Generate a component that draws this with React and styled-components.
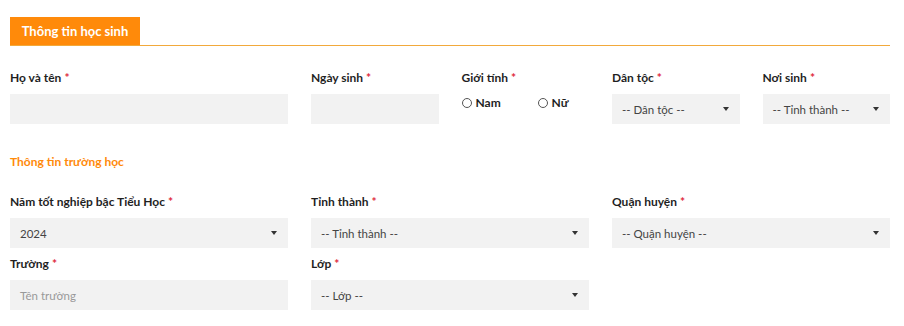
import React from "react";
import styled, { createGlobalStyle } from "styled-components";

const Global = createGlobalStyle`
  html, body { margin: 0; padding: 0; background: #fff; }
  body { font-family: Lato, "Open Sans", "Noto Sans", sans-serif; color: #222; }
  * { box-sizing: border-box; }
`;

const Page = styled.div`
  width: 904px;
  padding: 17px 14px 0 10px;
`;

const TabBar = styled.div`
  display: flex;
  border-bottom: 1px solid #f2a93b;
`;

const Tab = styled.div`
  background: #ff8a0a;
  color: #fff;
  font-weight: 700;
  font-size: 13px;
  height: 28px;
  line-height: 28px;
  width: 130px;
  text-align: center;
`;

const Grid = styled.div`
  display: grid;
  grid-template-columns: repeat(6, minmax(0, 1fr));
  column-gap: 23px;
  row-gap: ${(p) => p.$rowGap || 0}px;
  margin-top: ${(p) => p.$top || 0}px;
`;

const Field = styled.div`
  grid-column: span ${(p) => p.$span || 1};
  display: flex;
  flex-direction: column;
`;

const Label = styled.div`
  font-size: 12px;
  font-weight: 700;
  line-height: 16px;
  margin-bottom: 8px;
  color: #1f1f1f;
`;

const Req = styled.span`
  color: #e0283c;
  margin-left: 3px;
`;

const Box = styled.div`
  height: 30px;
  background: #f2f2f2;
  display: flex;
  align-items: center;
  padding: 0 10px;
  font-size: 11.5px;
  color: ${(p) => (p.$placeholder ? "#999" : "#444")};
  justify-content: space-between;
`;

const Caret = styled.span`
  width: 0;
  height: 0;
  border-left: 3.5px solid transparent;
  border-right: 3.5px solid transparent;
  border-top: 4px solid #333;
  margin-right: 1px;
`;

const Radios = styled.div`
  display: flex;
  align-items: center;
  margin-top: 1px;
`;

const RadioItem = styled.label`
  display: flex;
  align-items: center;
  flex: none;
  width: 76px;
  font-size: 12px;
  font-weight: 700;
  color: #1f1f1f;
`;

const Circle = styled.span`
  width: 10px;
  height: 10px;
  border-radius: 50%;
  border: 1px solid #555;
  margin-right: 4px;
  background: #fff;
`;

const SectionTitle = styled.div`
  color: #ff8a0a;
  font-weight: 700;
  font-size: 12px;
  line-height: 16px;
  margin-top: 30px;
`;

const Select = ({ children }) => (
  <Box>
    <span>{children}</span>
    <Caret />
  </Box>
);

const F = ({ label, span, children }) => (
  <Field $span={span}>
    <Label>
      {label}
      <Req>*</Req>
    </Label>
    {children}
  </Field>
);

export default function App() {
  return (
    <>
      <Global />
      <Page>
        <TabBar>
          <Tab>Thông tin học sinh</Tab>
        </TabBar>
        <Grid $top={24}>
          <F label="Họ và tên" span={2}>
            <Box />
          </F>
          <F label="Ngày sinh">
            <Box />
          </F>
          <F label="Giới tính">
            <Radios>
              <RadioItem>
                <Circle />
                Nam
              </RadioItem>
              <RadioItem>
                <Circle />
                Nữ
              </RadioItem>
            </Radios>
          </F>
          <F label="Dân tộc">
            <Select>-- Dân tộc --</Select>
          </F>
          <F label="Nơi sinh">
            <Select>-- Tỉnh thành --</Select>
          </F>
        </Grid>
        <SectionTitle>Thông tin trường học</SectionTitle>
        <Grid $top={24} $rowGap={8}>
          <F label="Năm tốt nghiệp bậc Tiểu Học" span={2}>
            <Select>2024</Select>
          </F>
          <F label="Tỉnh thành" span={2}>
            <Select>-- Tỉnh thành --</Select>
          </F>
          <F label="Quận huyện" span={2}>
            <Select>-- Quận huyện --</Select>
          </F>
          <F label="Trường" span={2}>
            <Box $placeholder>Tên trường</Box>
          </F>
          <F label="Lớp" span={2}>
            <Select>-- Lớp --</Select>
          </F>
        </Grid>
      </Page>
    </>
  );
}
